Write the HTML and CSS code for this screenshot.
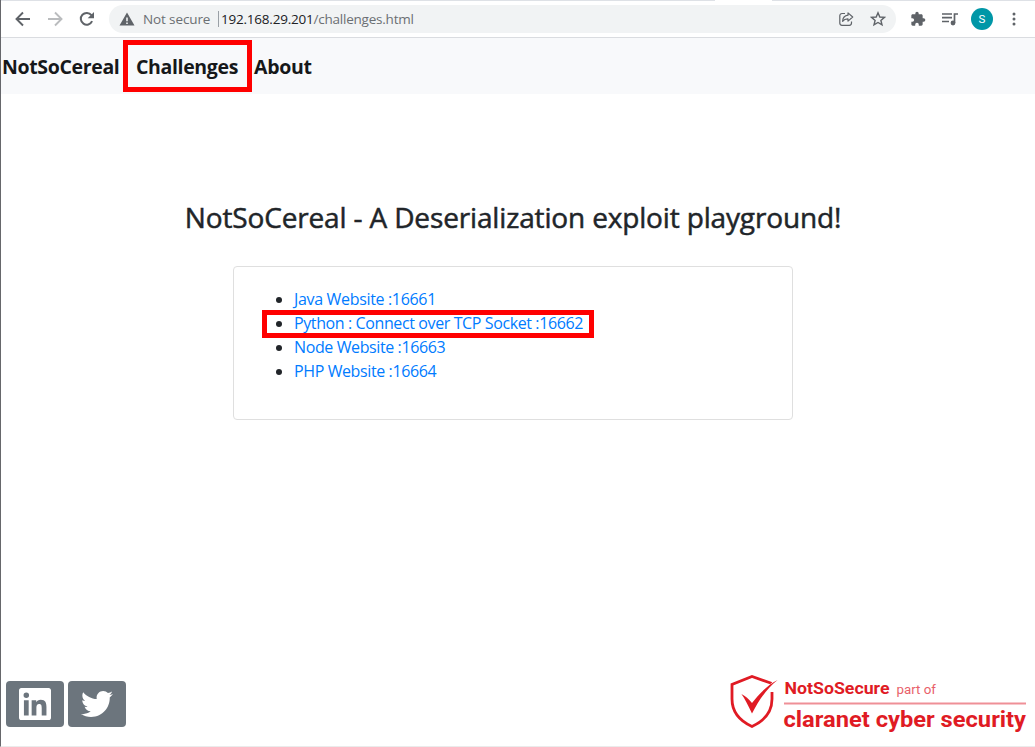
FILE: index.html
```html
<!DOCTYPE html>
<html lang="en">
<head>
<meta charset="utf-8">
<title>NotSoCereal</title>
<link rel="stylesheet" href="styles.css">
</head>
<body>
<div class="window">
  <div class="tabstrip"><span class="tab"></span></div>
  <div class="toolbar">
    <div class="controls">
      <svg class="icon" viewBox="0 0 16 16"><path d="M15 8H2M8 1.5 1.5 8 8 14.5" fill="none" stroke="#5f6368" stroke-width="1.9"/></svg>
      <svg class="icon" viewBox="0 0 16 16"><path d="M1 8h13M8 1.5 14.5 8 8 14.5" fill="none" stroke="#babcbe" stroke-width="1.9"/></svg>
      <svg class="icon" viewBox="0 0 16 16"><path d="M13.1 10.2A5.9 5.9 0 1 1 12.4 4.2L13.5 5.4" fill="none" stroke="#5f6368" stroke-width="2"/><path d="M15 1v6.3H8.7z" fill="#5f6368"/></svg>
    </div>
    <div class="omnibox">
      <svg class="warning" viewBox="0 0 16 14"><path fill="#5f6368" fill-rule="evenodd" d="M8 0.5 15.5 13.5H.5zM7.2 5.5v3.7h1.6V5.5zM7.2 10.4V12h1.6v-1.6z"/></svg>
      <span class="insecure">Not secure</span>
      <span class="divider"></span>
      <span class="url"><span class="host">192.168.29.201</span><span class="path">/challenges.html</span></span>
      <svg class="share" viewBox="0 0 16 16"><g fill="none" stroke="#5f6368" stroke-width="1.2" stroke-linejoin="round"><path d="M7 2.5H4a2.2 2.2 0 0 0-2.2 2.2v7.4A2.2 2.2 0 0 0 4 14.3h7.3a2.2 2.2 0 0 0 2.2-2.2v-1.5"/><path d="M10 1.9 14.7 6 10 10.1V7.9C7.3 7.8 5.8 8.7 4.6 10.3 4.8 6.8 6.7 4.6 10 4.2z"/></g></svg>
      <svg class="star" viewBox="0 0 16 16"><path d="M8 1.8 9.8 6l4.6.4-3.5 3 1.1 4.5-4-2.4-4 2.4 1.1-4.5-3.5-3L6.200 6z" fill="none" stroke="#5f6368" stroke-width="1.4"/></svg>
    </div>
    <div class="actions">
      <svg class="icon" viewBox="0 0 24 24"><path fill="#5f6368" d="M20.500 11H19V7c0-1.100-.9-2-2-2h-4V3.500a2.500 2.500 0 0 0-5 0V5H4c-1.100 0-2 .9-2 2v3.800h1.500a2.700 2.700 0 0 1 0 5.400H2V20c0 1.100.9 2 2 2h3.800v-1.500a2.700 2.700 0 0 1 5.400 0V22H17c1.100 0 2-.9 2-2v-4h1.500a2.500 2.500 0 0 0 0-5z"/></svg>
      <svg class="icon" viewBox="0 0 16 16"><path d="M0 3h10M0 6.700h10M0 10.500h7M12.500 12V3H16" fill="none" stroke="#5f6368" stroke-width="1.7"/><circle cx="11" cy="12" r="2.400" fill="#5f6368"/></svg>
      <span class="avatar">S</span>
      <svg class="dots" viewBox="0 0 4 14" fill="#5f6368"><circle cx="2" cy="2" r="1.500"/><circle cx="2" cy="7" r="1.500"/><circle cx="2" cy="12" r="1.500"/></svg>
    </div>
  </div>
  <nav class="navbar">
    <a class="nav-link brand">NotSoCereal</a>
    <a class="nav-link challenges">Challenges<span class="mark"></span></a>
    <a class="nav-link about">About</a>
  </nav>
  <main class="content">
    <h1 class="title">NotSoCereal - A Deserialization exploit playground!</h1>
    <section class="card">
      <ul class="list">
        <li><a class="java">Java Website :16661</a></li>
        <li class="marked"><a class="python">Python : Connect over TCP Socket :16662</a><span class="mark"></span></li>
        <li><a class="node">Node Website :16663</a></li>
        <li><a class="php">PHP Website :16664</a></li>
      </ul>
    </section>
  </main>
  <footer class="footer">
    <div class="social">
      <a class="button"><svg class="linkedin" viewBox="0 0 448 448"><path fill="#fff" d="M416 0H31.900C14.300 0 0 14.500 0 32.300v383.400C0 433.500 14.300 448 31.900 448H416c17.600 0 32-14.500 32-32.300V32.300C448 14.500 433.600 0 416 0zM135.400 384H69V170.200h66.500V384zm-33.200-243a38.500 38.500 0 1 1 0-77 38.500 38.500 0 0 1 0 77zm282.100 243h-66.400V280c0-24.800-.5-56.700-34.500-56.700-34.600 0-39.900 27-39.900 54.900V384h-66.400V170.200h63.700v29.200h.9c8.900-16.800 30.600-34.500 62.900-34.500 67.200 0 79.700 44.300 79.700 101.900z"/></svg></a>
      <a class="button"><svg class="twitter" viewBox="0 0 512 416"><path fill="#fff" d="M459.400 103.700c.3 4.500.3 9.100.3 13.600 0 138.700-105.600 298.600-298.600 298.600-59.500 0-114.700-17.200-161.100-47.100 8.400 1 16.600 1.300 25.300 1.300 49.100 0 94.200-16.600 130.300-44.800-46.100-1-84.800-31.200-98.100-72.800 6.500 1 13 1.600 19.800 1.600 9.400 0 18.800-1.300 27.600-3.600-48.100-9.700-84.100-52-84.100-103v-1.300c14 7.800 30.200 12.700 47.400 13.300-28.300-18.800-46.800-51-46.800-87.400 0-19.500 5.200-37.400 14.300-53 51.700 63.700 129.300 105.300 216.400 109.800-1.600-7.800-2.600-15.900-2.600-24C249.500 46.800 296.300 0 354.500 0c30.200 0 57.500 12.700 76.700 33.100 23.700-4.500 46.500-13.300 66.600-25.300-7.800 24.400-24.400 44.800-46.100 57.800 21.100-2.300 41.600-8.100 60.400-16.200-14.300 20.800-32.200 39.300-52.600 54.300z"/></svg></a>
    </div>
    <svg class="logo" viewBox="0 0 300 60">
      <path d="M42 12.500 22 5.500 2 13.500V28C2 41 10 50 22 55.500 34 50 42 41 42 28V21" transform="translate(0 -2)" fill="none" stroke="#e01b24" stroke-width="2.800"/>
      <path d="M42 13 50 6" stroke="#fff" stroke-width="5"/>
      <path d="M48 7.500C39 14 30 26 22.300 41 18.500 33 15 26 11.700 21.500c4 2 7.500 5 10.600 9C29 21.500 38 12.500 48 7.500z" transform="translate(-.3 -.5)" fill="#e01b24"/>
      <text class="logo-name" x="54.500" y="21" textLength="105" lengthAdjust="spacingAndGlyphs">NotSoSecure</text>
      <text class="logo-part" x="166.500" y="21" textLength="39.500" lengthAdjust="spacingAndGlyphs">part of</text>
      <path d="M54 30.500h242" stroke="#ef9097" stroke-width="2"/>
      <text class="logo-claranet" x="53.500" y="54" textLength="242.500" lengthAdjust="spacingAndGlyphs">claranet cyber security</text>
    </svg>
  </footer>
</div>
</body>
</html>
```
FILE: styles.css
```css
* { box-sizing: border-box; }
body { margin: 0; background: #fff; font-family: "Open Sans", "Noto Sans", sans-serif; color: #212529; }
svg { display: block; flex: none; }
.window { width: 1035px; height: 747px; display: flex; flex-direction: column; border-left: 1px solid #66676b; border-bottom: 1px solid #ebebeb; overflow: hidden; }
.tabstrip { height: 1px; flex: none; background: #dee1e6; }
.tab { display: block; width: 57px; height: 1px; margin-left: 714px; background: #fff; }
.toolbar { height: 37px; flex: none; display: flex; align-items: center; border-bottom: 1px solid #dadce0; }
.controls { display: flex; gap: 16px; width: 108px; padding-left: 14px; }
.icon { width: 16px; height: 16px; }
.omnibox { width: 787px; height: 28px; border-radius: 14px; background: #f1f3f4; display: flex; align-items: center; padding-left: 10px; font-size: 13.5px; white-space: nowrap; color: #6b6f73; }
.warning { width: 16px; height: 14px; margin-right: 8px; }
.insecure { width: 75px; letter-spacing: -0.12px; }
.divider { width: 1px; height: 16px; background: #9aa0a6; margin-right: 2px; }
.url { width: 617px; letter-spacing: -0.22px; }
.host { color: #202124; }
.share { width: 16px; height: 16px; margin-right: 16px; }
.star { width: 16px; height: 16px; }
.actions { display: flex; align-items: center; margin-left: 14px; gap: 16px; }
.avatar { width: 22px; height: 22px; border-radius: 50%; background: #0097a7; color: #fff; font: 11.5px/22px Roboto, sans-serif; text-align: center; margin: 0 3px 0 -3px; }
.dots { width: 4px; height: 14px; }
.navbar { height: 56px; flex: none; background: #f8f9fb; display: flex; align-items: center; font-size: 19.500px; line-height: 30px; font-weight: 700; color: #16181a; white-space: nowrap; padding: 2px 0 0 1px; letter-spacing: -0.35px; }
.nav-link { position: relative; }
.brand { width: 134px; }
.challenges { width: 118px; }
.about { letter-spacing: -0.3px; }
.mark { position: absolute; border: 5px solid #f00; }
.challenges .mark { left: -13px; top: -12px; width: 129px; height: 52px; }
.content { flex: 1; display: flex; flex-direction: column; align-items: center; padding-right: 10px; }
.title { margin: 106px 0 0; height: 66px; font-size: 28px; line-height: 34px; font-weight: 400; -webkit-text-stroke: 0.5px #212529; letter-spacing: -0.15px; white-space: nowrap; }
.card { width: 560px; height: 154px; border: 1px solid #dfdfdf; border-radius: 4px; padding: 20px; }
.list { margin: 0; padding-left: 40px; font-size: 16px; line-height: 24px; color: #212529; letter-spacing: -0.39px; }
.list li { position: relative; white-space: nowrap; }
.list a { color: #007bff; }
.java { letter-spacing: -0.33px; }
.marked .mark { left: -32px; top: -1px; width: 332px; height: 28px; }
.footer { height: 76px; flex: none; display: flex; justify-content: space-between; padding: 3px 5px 0 5px; }
.social { display: flex; gap: 4px; padding-top: 8px; }
.button { width: 58px; height: 46px; border-radius: 4px; background: #6c757d; display: flex; align-items: center; justify-content: center; }
.linkedin { width: 32px; height: 32px; }
.twitter { width: 32px; height: 26px; }
.logo { width: 300px; height: 60px; }
.logo text { font-family: Roboto, sans-serif; fill: #e01b24; }
.logo .logo-name { font-size: 16.500px; font-weight: 700; }
.logo .logo-part { font-size: 12.500px; fill: #e8606a; }
.logo .logo-claranet { font-size: 22px; font-weight: 700; }
```
